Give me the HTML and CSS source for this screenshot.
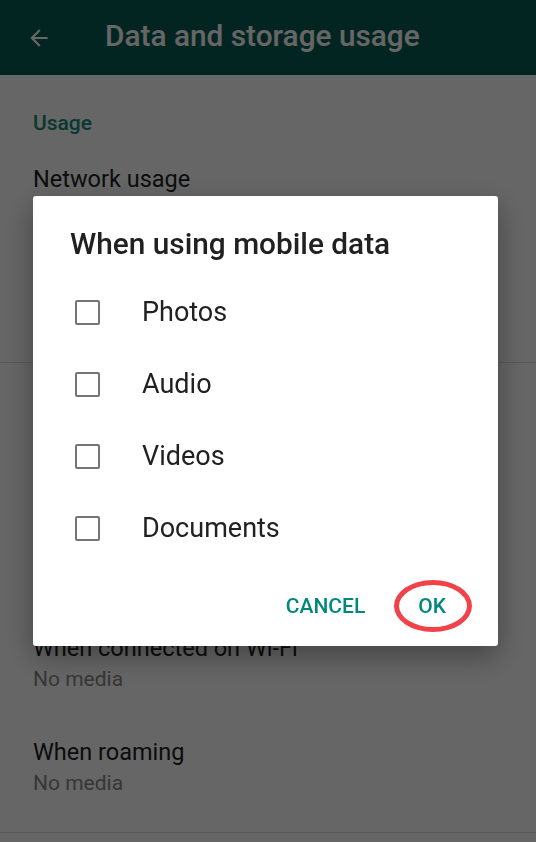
FILE: index.html
```html
<!DOCTYPE html>
<html>
<head>
    <title>Data and storage usage</title>
    <link rel="stylesheet" href="styles.css">
</head>
<body>
    <!-- App bar -->
    <div class="appbar">
        <svg class="back" width="24" height="24" viewBox="0 0 24 24">
            <path d="M20 11H7.83l5.59-5.59L12 4l-8 8 8 8 1.41-1.41L7.83 13H20v-2z" fill="#fff"/>
        </svg>
        <div class="appbar-title">Data and storage usage</div>
    </div>

    <!-- Settings list (the part behind the dialog is left out) -->
    <div class="section usage">
        <div class="section-title">Usage</div>
        <div class="item">
            <div class="item-title">Network usage</div>
        </div>
    </div>
    <div class="section downloads">
        <div class="item">
            <div class="item-title">When connected on Wi-Fi</div>
            <div class="item-sub">No media</div>
        </div>
        <div class="item">
            <div class="item-title">When roaming</div>
            <div class="item-sub">No media</div>
        </div>
    </div>

    <!-- Dialog -->
    <div class="scrim">
        <div class="dialog">
            <h2>When using mobile data</h2>
            <label class="check-row"><span class="box"></span>Photos</label>
            <label class="check-row"><span class="box"></span>Audio</label>
            <label class="check-row"><span class="box"></span>Videos</label>
            <label class="check-row"><span class="box"></span>Documents</label>
            <div class="actions">
                <button>CANCEL</button>
                <button class="ok">OK</button>
            </div>
        </div>
    </div>
</body>
</html>
```

FILE: styles.css
```css
body {
    font-family: Roboto, 'Noto Sans', sans-serif;
    margin: 0;
    background: #fff;
    color: #212121;
    width: 536px;
    height: 842px;
    overflow: hidden;
}
.appbar {
    height: 75px;
    background: #075e54;
    display: flex;
    align-items: center;
    color: #fff;
}
.back {
    margin-left: 26px;
    width: 26px;
    height: 26px;
}
.appbar-title {
    margin-left: 53px;
    font-size: 29.8px;
    font-weight: 500;
    padding-bottom: 5px;
}
.section {
    border-bottom: 1px solid #ddd;
    padding: 0 33px;
    box-sizing: border-box;
}
.usage {
    height: 288px;
    padding-top: 34px;
}
.section-title {
    color: #128c7e;
    font-size: 21px;
    font-weight: 500;
    line-height: 28px;
    margin-bottom: 27px;
}
.downloads {
    height: 470px;
    display: flex;
    flex-direction: column;
    justify-content: flex-end;
    gap: 42px;
    padding-bottom: 33px;
}
.item-title {
    font-size: 23.5px;
    line-height: 30px;
}
.item-sub {
    font-size: 21px;
    line-height: 32px;
    color: #888;
}
.scrim {
    position: fixed;
    inset: 0;
    background: rgba(0, 0, 0, 0.6);
    display: flex;
    align-items: center;
    justify-content: center;
    padding-right: 5px;
}
.dialog {
    width: 465px;
    height: 450px;
    box-sizing: border-box;
    background: #fff;
    border-radius: 3px;
    padding-top: 30px;
    box-shadow: 0 10px 30px rgba(0, 0, 0, 0.35);
}
.dialog h2 {
    margin: 0 0 14px 37px;
    font-size: 29.8px;
    font-weight: 500;
    line-height: 36px;
    color: #212121;
}
.check-row {
    display: flex;
    align-items: center;
    height: 72px;
    font-size: 27px;
    color: #212121;
}
.box {
    width: 21px;
    height: 21px;
    border: 2px solid #757575;
    border-radius: 2px;
    margin: 0 42px;
}
.actions {
    display: flex;
    justify-content: flex-end;
    margin-top: 22px;
    padding-right: 36px;
    gap: 21px;
}
.actions button {
    background: none;
    border: none;
    font-family: Roboto, sans-serif;
    font-size: 21px;
    font-weight: 500;
    color: #00897b;
    padding: 0 16px;
    height: 40px;
    position: relative;
}
.actions .ok::after {
    content: '';
    position: absolute;
    left: -8px;
    right: -10px;
    top: -6px;
    bottom: -6px;
    border: 5px solid #f0424a;
    border-radius: 50%;
}
```
